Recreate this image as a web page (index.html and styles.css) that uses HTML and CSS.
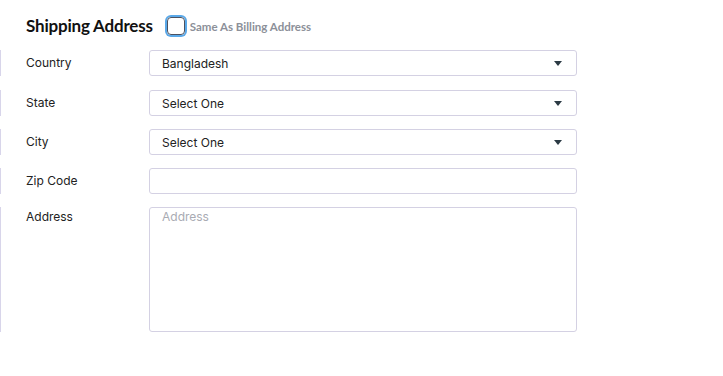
FILE: index.html
```html
<!DOCTYPE html>
<html lang="en">
    <head>
        <meta charset="UTF-8" />
        <meta name="viewport" content="width=device-width, initial-scale=1.0"/>
        <title>Shipping Address</title>
        <link rel="stylesheet" href="styles.css">
    </head>
    <body>
        <div class="shipping">
            <div class="heading">
                <h2>Shipping Address</h2>
                <label class="same-as">
                    <span class="checkbox"></span>
                    Same As Billing Address
                </label>
            </div>

            <div class="row row-first">
                <div class="label">Country</div>
                <div class="field select">
                    <span>Bangladesh</span>
                    <span class="caret"></span>
                </div>
            </div>

            <div class="row">
                <div class="label">State</div>
                <div class="field select">
                    <span>Select One</span>
                    <span class="caret"></span>
                </div>
            </div>

            <div class="row">
                <div class="label">City</div>
                <div class="field select">
                    <span>Select One</span>
                    <span class="caret"></span>
                </div>
            </div>

            <div class="row">
                <div class="label">Zip Code</div>
                <div class="field"></div>
            </div>

            <div class="row row-tall">
                <div class="label">Address</div>
                <div class="field textarea">
                    <span class="placeholder">Address</span>
                </div>
            </div>
        </div>
    </body>
</html>
```

FILE: styles.css
```css
* {
    margin: 0;
    padding: 0;
    box-sizing: border-box;
}

body {
    background-color: #fff;
    font-family: 'Inter', sans-serif;
    color: #1f2430;
}

.shipping {
    width: 577px;
    padding-top: 14px;
}

.heading {
    display: flex;
    align-items: center;
    gap: 14px;
    padding-left: 26px;
    height: 22px;
    margin-bottom: 14px;
}

.heading h2 {
    font-family: 'Lato', sans-serif;
    font-size: 17px;
    font-weight: 700;
    letter-spacing: -0.2px;
    color: #111;
}

.same-as {
    display: flex;
    align-items: center;
    gap: 5px;
    font-family: 'Lato', sans-serif;
    font-size: 11.5px;
    font-weight: 700;
    color: #8c9099;
    padding-top: 2px;
}

.checkbox {
    width: 18px;
    height: 18px;
    border: 1.5px solid #4b5160;
    border-radius: 4px;
    box-shadow: 0 0 0 2px #5aa8e8;
}

.row {
    display: flex;
    height: 26px;
    margin-bottom: 13px;
    border-left: 1px solid #d8d5ea;
}

.row-first {
    margin-bottom: 14px;
}

.row-tall {
    height: 125px;
}

.label {
    width: 148px;
    padding-left: 25px;
    font-size: 12px;
    line-height: 26px;
    color: #222;
}

.row-tall .label {
    line-height: 18px;
    padding-top: 1px;
}

.field {
    flex: 1;
    border: 1px solid #d4d1e3;
    border-radius: 3px;
    display: flex;
    align-items: center;
    justify-content: space-between;
    padding: 0 14px 0 12px;
    font-size: 12px;
    color: #222;
}

.textarea {
    align-items: flex-start;
    padding-top: 1px;
}

.placeholder {
    color: #a9abb3;
}

.caret {
    width: 0;
    height: 0;
    border-left: 4.5px solid transparent;
    border-right: 4.5px solid transparent;
    border-top: 5px solid #2b3a44;
}
```
